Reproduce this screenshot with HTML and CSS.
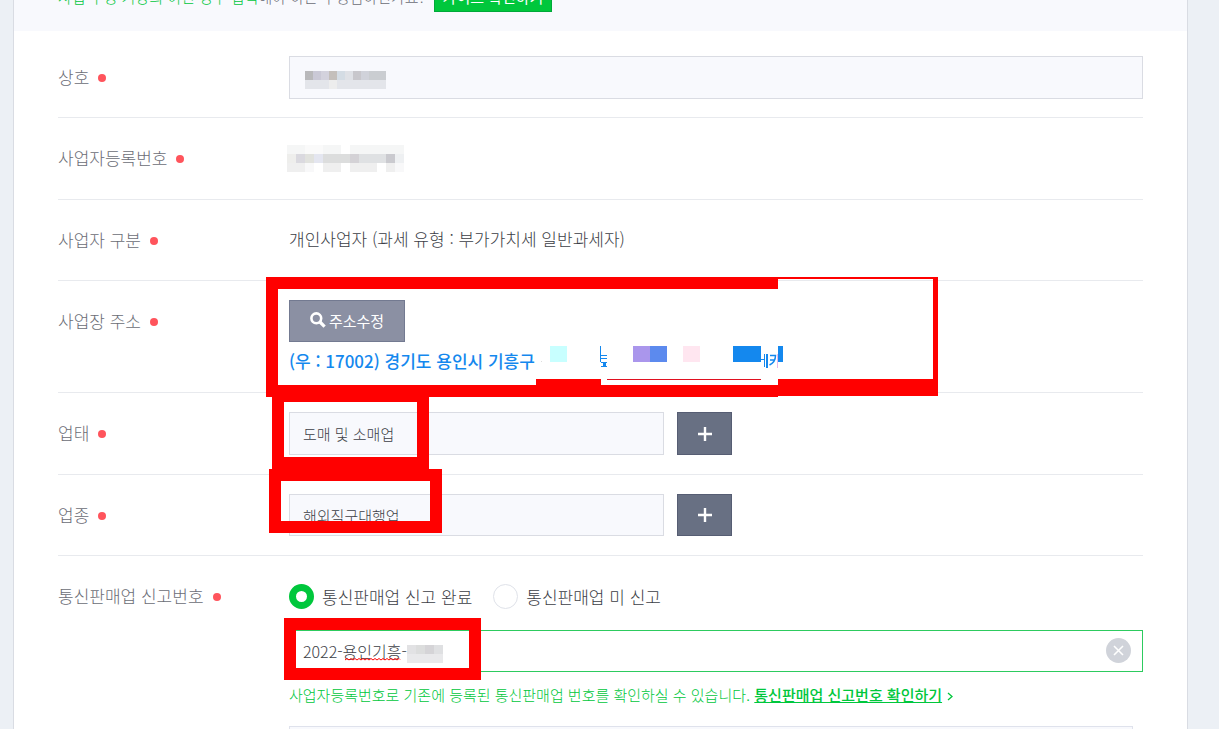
FILE: index.html
```
<!DOCTYPE html>
<html lang="ko">
<head>
    <meta charset="UTF-8">
    <title>사업자 정보</title>
    <link rel="stylesheet" href="styles.css">
</head>
<body>
<div id="container">
    <div class="guide">
        <p><em>사업 구성 기장의 이런 경우 입력</em>해야 하는 수정심하신가요? <a href="#" class="btn-guide">가이드 확인하기</a></p>
    </div>
    <form class="form">
        <div class="row">
            <label class="title" for="company">상호</label>
            <div class="cont">
                <div class="field">
                    <input type="text" class="text" id="company" readonly>
                    <svg class="mosaic name" width="81" height="18" shape-rendering="crispEdges">
                        <path fill="#b9b9bb" d="M0 0h8v9H0z"/><path fill="#cac9d6" d="M8 0h8v9H8z"/><path fill="#d3d2dd" d="M16 0h8v9h-8z"/><path fill="#c4bfbb" d="M24 0h8v9h-8z"/><path fill="#d4dce4" d="M32 0h8v9h-8z"/><path fill="#dfe1e6" d="M40 0h8v9h-8z"/><path fill="#c8c7cc" d="M48 0h8v9h-8z"/><path fill="#d0d2da" d="M56 0h8v9h-8z"/><path fill="#cacdd1" d="M64 0h17v9H64z"/>
                        <path fill="#e3e5ea" d="M0 9h81v9H0z"/><path fill="#ededed" d="M24 9h8v9h-8z"/>
                    </svg>
                </div>
            </div>
        </div>
        <div class="row tall">
            <span class="title">사업자등록번호</span>
            <div class="cont">
                <svg class="mosaic-line" width="117" height="27" shape-rendering="crispEdges">
                    <path fill="#f5f6f6" d="M0 0h18v9H0zM36 0h18v9H36zM63 0h54v9H63z"/><path fill="#fafafa" d="M18 0h18v9H18z"/>
                    <path fill="#eeeeec" d="M0 9h9v9H0z"/><path fill="#dad9df" d="M9 9h9v9H9z"/><path fill="#e1e2de" d="M18 9h9v9h-9z"/><path fill="#e4e6f0" d="M27 9h9v9h-9z"/><path fill="#dcdddd" d="M36 9h27v9H36z"/><path fill="#d4d2d6" d="M63 9h9v9h-9z"/><path fill="#dfe1e3" d="M72 9h27v9H72z"/><path fill="#cacacf" d="M99 9h9v9h-9z"/><path fill="#eef0f2" d="M108 9h9v9h-9z"/>
                    <path fill="#efefef" d="M0 18h18v9H0zM36 18h18v9H36zM63 18h27v9H63zM99 18h9v9h-9z"/><path fill="#f8f8f9" d="M18 18h9v9h-9zM108 18h9v9h-9z"/>
                </svg>
            </div>
        </div>
        <div class="row">
            <span class="title">사업자 구분</span>
            <div class="cont">
                <p class="value">개인사업자 (과세 유형 : 부가가치세 일반과세자)</p>
            </div>
        </div>
        <div class="row row-address">
            <span class="title">사업장 주소</span>
            <div class="cont">
                <button type="button" class="btn-search">
                    <svg width="16" height="16" viewBox="0 0 16 16"><circle cx="6.3" cy="6.3" r="4.9" fill="none" stroke="#fff" stroke-width="2.6"/><path d="M10 10l4.6 4.6" stroke="#fff" stroke-width="3.2"/></svg>
                    주소수정
                </button>
                <p class="address">(우 : 17002) 경기도 용인시 기흥구</p>
            </div>
            <svg class="mark mark-address" width="672" height="120" shape-rendering="crispEdges">
                <path fill="#f00" d="M0 0h672v119H512v1H0zM12 12v96h258v-6h65v6h177v-6h155V2H512v10z" fill-rule="evenodd"/>
                <path fill="#ddd" d="M275 84h1v1h-1z"/>
                <path fill="#c8ffff" d="M284 69h17v16h-17z"/>
                <path fill="#aa96ec" d="M367 69h17v16h-17z"/>
                <path fill="#5c8aee" d="M384 69h17v16h-17z"/>
                <path fill="#ffe6f0" d="M417 69h17v16h-17z"/>
                <path fill="#1488ee" d="M467 69h28v16h-28zM512 69h5v16h-5zM334 69h1v16h-1zM335 78h6v1h-6zM335 81h6v1h-6zM335 85h6v1h-6zM337 86h3v3h-3zM335 89h6v1h-6z"/>
                <path fill="#e01020" d="M341 102h154v1H341z"/>
                <g fill="none" stroke="#1488ee"><path d="M495 82.500h3M498.500 77v13"/><path stroke-width="2" d="M501 77v14"/><path stroke="#e5b9ea" d="M511.500 77v14"/><path shape-rendering="auto" stroke-width="1.500" d="M504 78.500h5.500c0 4-2 7.500-6 9.500M504 83h5"/></g>
            </svg>
        </div>
        <div class="row tall">
            <label class="title" for="type">업태</label>
            <div class="cont add">
                <input type="text" class="text" id="type" value="도매 및 소매업" readonly>
                <button type="button" class="btn-add" aria-label="업태 추가"><svg width="14" height="14"><path d="M7 0v14M0 7h14" stroke="#fff" stroke-width="2.400"/></svg></button>
            </div>
            <i class="mark mark-type"></i>
        </div>
        <div class="row row-item">
            <label class="title" for="item">업종</label>
            <div class="cont add">
                <input type="text" class="text" id="item" value="해외직구대행업" readonly>
                <button type="button" class="btn-add" aria-label="업종 추가"><svg width="14" height="14"><path d="M7 0v14M0 7h14" stroke="#fff" stroke-width="2.400"/></svg></button>
            </div>
            <i class="mark mark-item"></i>
        </div>
        <div class="row row-report">
            <label class="title" for="number">통신판매업 신고번호</label>
            <div class="cont">
                <div class="radios">
                    <label><input type="radio" name="report" checked>통신판매업 신고 완료</label>
                    <label><input type="radio" name="report">통신판매업 미 신고</label>
                </div>
                <div class="field">
                    <input type="text" class="text on" id="number" value="2022-용인기흥-">
                    <svg class="wave" width="57" height="3"><path d="M0 2l2-1.500 2 1.500 2-1.500 2 1.500 2-1.500 2 1.500 2-1.500 2 1.500 2-1.500 2 1.500 2-1.500 2 1.500 2-1.500 2 1.500 2-1.500 2 1.500 2-1.500 2 1.500 2-1.500 2 1.500 2-1.500 2 1.500 2-1.500 2 1.500 2-1.500 2 1.500 2-1.500 1 1" fill="none" stroke="#f00"/></svg>
                    <svg class="mosaic num" width="36" height="18" shape-rendering="crispEdges"><path fill="#e2e2e4" d="M0 0h9v9H0z"/><path fill="#dcdddd" d="M9 0h9v9H9z"/><path fill="#d5d4d7" d="M18 0h9v9h-9z"/><path fill="#dfe0e2" d="M27 0h9v9h-9z"/><path fill="#e9e9eb" d="M0 9h36v9H0z"/></svg>
                    <button type="button" class="btn-clear" aria-label="삭제"><svg width="11" height="11"><path d="M1 1l9 9M10 1l-9 9" stroke="#fff" stroke-width="1.600"/></svg></button>
                    <i class="mark mark-number"></i>
                </div>
                <p class="help">사업자등록번호로 기존에 등록된 통신판매업 번호를 확인하실 수 있습니다. <a href="#">통신판매업 신고번호 확인하기</a><svg width="6" height="9"><path d="M1 1l4 3.500-4 3.500" fill="none" stroke="#00c73c" stroke-width="1.300"/></svg></p>
                <div class="box"></div>
            </div>
        </div>
    </form>
</div>
</body>
</html>
```
FILE: styles.css
```
* {
    margin: 0;
    padding: 0;
    box-sizing: border-box;
}

body {
    background-color: #ecf0f5;
    color: #3c3e46;
    font: 300 17px/24px "Noto Sans CJK KR", sans-serif;
    overflow: hidden;
}

button, input {
    font-family: inherit;
    font-weight: inherit;
}

#container {
    margin: 0 31px 0 13px;
    border: solid #d9dce3;
    border-width: 0 1px;
    background-color: #fff;
}

.guide {
    display: flex;
    align-items: flex-end;
    height: 31px;
    padding: 0 0 19px 44px;
    background-color: #f8f9fd;
}

.guide p {
    color: #6b6d76;
    font-size: 15px;
    line-height: 30px;
    white-space: nowrap;
}

.guide em {
    color: #00c73c;
    font-style: normal;
}

.btn-guide {
    display: inline-block;
    height: 30px;
    margin-left: 4px;
    padding: 0 8px;
    border: 1px solid #00a93a;
    background-color: #00c73c;
    color: #fff;
    font-size: 15px;
    font-weight: 400;
    line-height: 28px;
    text-decoration: none;
    vertical-align: top;
}

.form {
    margin: 0 44px;
}

.row {
    display: flex;
    position: relative;
    padding: 19px 0 18px;
    border-bottom: 1px solid #e8eaee;
}

.row:first-child {
    padding-top: 25px;
}

.row.tall {
    padding-bottom: 19px;
}

.title {
    width: 231px;
    color: #6b6d76;
    line-height: 41px;
}

.title::after {
    content: "";
    display: inline-block;
    width: 8px;
    height: 8px;
    margin-left: 9px;
    border-radius: 50%;
    background-color: #ff545c;
    vertical-align: 2px;
}

.cont {
    flex: 1;
    min-width: 0;
}

.value {
    height: 43px;
    line-height: 40px;
}

.field {
    position: relative;
}

.text {
    display: block;
    width: 100%;
    height: 43px;
    padding: 0 13px;
    border: 1px solid #dadce3;
    background-color: #f8f9fd;
    color: #3c3e46;
    font-size: 15px;
    outline: none;
}

.text.on {
    height: 42px;
    border-color: #2dcb5f;
    background-color: #fff;
    font-size: 16px;
}

.mosaic {
    position: absolute;
    top: 15px;
    left: 16px;
}

.mosaic.num {
    left: 118px;
}

.mosaic-line {
    display: block;
    margin: 8px 0 8px -2px;
}

.row-address {
    padding-bottom: 16px;
}

.btn-search {
    display: flex;
    align-items: center;
    justify-content: center;
    gap: 3px;
    width: 116px;
    height: 42px;
    padding-bottom: 2px;
    border: 1px solid #737a91;
    background-color: #8b90a3;
    color: #fff;
    font-size: 15px;
    font-weight: 400;
}

.address {
    margin: 6px 0 2px;
    color: #1488ee;
    font-size: 17px;
    font-weight: 500;
    line-height: 26px;
}

.add {
    display: flex;
    gap: 13px;
}

.add .text {
    width: 375px;
}

.btn-add {
    display: flex;
    align-items: center;
    justify-content: center;
    width: 55px;
    height: 43px;
    border: 1px solid #565d73;
    background-color: #687083;
}

.row-item {
    padding-bottom: 19px;
}

.row-item .text, .row-item .btn-add {
    height: 42px;
}

.row-item .title {
    height: 42px;
}

/* red marker frames over the form */
.mark {
    position: absolute;
    z-index: 1;
    pointer-events: none;
}

i.mark {
    border: 12px solid #f00;
}

.mark-address {
    top: -4px;
    left: 208px;
}

.mark-type {
    top: -3px;
    left: 214px;
    width: 157px;
    height: 79px;
}

.mark-item {
    top: -6px;
    left: 211px;
    width: 173px;
    height: 64px;
}

.mark-number {
    top: -12px;
    left: -5px;
    width: 197px;
    height: 62px;
}

.row-report {
    border-bottom: 0;
}

.radios {
    display: flex;
    gap: 21px;
    height: 43px;
    margin-bottom: 12px;
}

.radios label {
    display: flex;
    align-items: center;
    gap: 8px;
}

.radios input {
    width: 25px;
    height: 25px;
    border: 1px solid #dfe2e9;
    border-radius: 50%;
    appearance: none;
}

.radios input:checked {
    border: 7px solid #00c73c;
}

.wave {
    position: absolute;
    top: 28px;
    left: 56px;
}

.btn-clear {
    display: flex;
    position: absolute;
    top: 8px;
    right: 12px;
    align-items: center;
    justify-content: center;
    width: 25px;
    height: 25px;
    border: 0;
    border-radius: 50%;
    background-color: #d0d3da;
}

.help {
    margin-top: 12px;
    color: #00c73c;
    font-family: "Liberation Sans", "Noto Sans CJK KR", sans-serif;
    font-size: 15px;
    white-space: nowrap;
}

.help a {
    color: inherit;
    font-weight: 500;
}

.help svg {
    margin-left: 5px;
}

.box {
    height: 40px;
    margin: 18px 10px 0 0;
    border: 1px solid #dfe2ec;
    background-color: #f8f9fd;
}
```
